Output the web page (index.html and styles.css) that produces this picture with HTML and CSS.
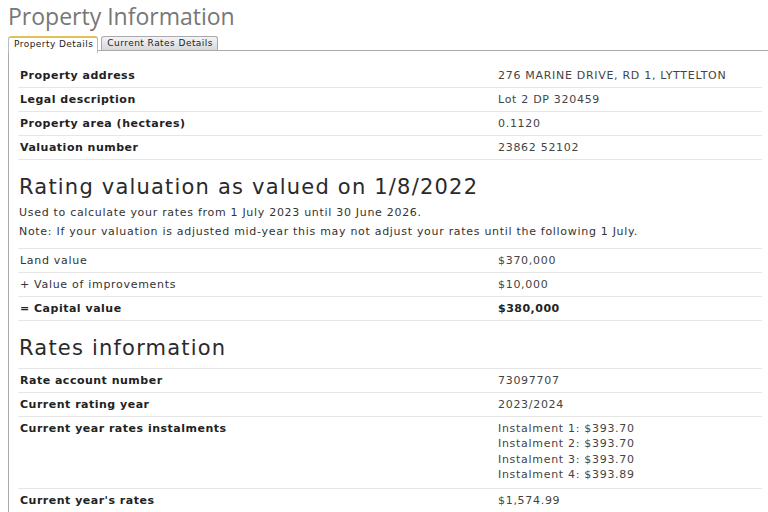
FILE: index.html
```html
<!DOCTYPE html>
<html lang="en">
<head>
  <meta charset="UTF-8">
  <meta name="viewport" content="width=device-width, initial-scale=1.0">
  <title>Property Information</title>
  <link rel="stylesheet" href="styles.css">
</head>
<body>
  <h1 class="page-title">Property Information</h1>

  <div class="tabs">
    <ul class="tab-list">
      <li class="tab active">Property Details</li>
      <li class="tab">Current Rates Details</li>
    </ul>

    <div class="tab-panel">
      <table class="info-table">
        <tr><th>Property address</th><td>276 MARINE DRIVE, RD 1, LYTTELTON</td></tr>
        <tr><th>Legal description</th><td>Lot 2 DP 320459</td></tr>
        <tr><th>Property area (hectares)</th><td>0.1120</td></tr>
        <tr><th>Valuation number</th><td>23862 52102</td></tr>
      </table>

      <h2>Rating valuation as valued on 1/8/2022</h2>
      <p class="note">Used to calculate your rates from 1 July 2023 until 30 June 2026.</p>
      <p class="note">Note: If your valuation is adjusted mid-year this may not adjust your rates until the following 1 July.</p>

      <table class="info-table lined">
        <tr><td class="label">Land value</td><td>$370,000</td></tr>
        <tr><td class="label">+ Value of improvements</td><td>$10,000</td></tr>
        <tr class="total"><th>= Capital value</th><td>$380,000</td></tr>
      </table>

      <h2>Rates information</h2>
      <table class="info-table lined">
        <tr><th>Rate account number</th><td>73097707</td></tr>
        <tr><th>Current rating year</th><td>2023/2024</td></tr>
        <tr class="multi">
          <th>Current year rates instalments</th>
          <td>
            Instalment 1: $393.70<br>
            Instalment 2: $393.70<br>
            Instalment 3: $393.70<br>
            Instalment 4: $393.89
          </td>
        </tr>
        <tr><th>Current year's rates</th><td>$1,574.99</td></tr>
      </table>
    </div>
  </div>
</body>
</html>
```

FILE: styles.css
```css
body {
  margin: 0 0 0 8px;
  font-family: "DejaVu Sans", Verdana, sans-serif;
  font-size: 11px;
  letter-spacing: 0.7px;
  color: #333;
  background: #fff;
}
.page-title {
  margin: 0;
  font-family: "Open Sans", sans-serif;
  font-weight: normal;
  font-size: 23px;
  letter-spacing: 0;
  line-height: 32px;
  color: #777;
}
.tab-list {
  display: flex;
  gap: 3px;
  list-style: none;
  margin: 4px 0 0;
  padding: 0;
  height: 14px;
}
.tab {
  font-size: 9px;
  letter-spacing: 0.45px;
  line-height: 13px;
  padding: 0 4px 0 5px;
  border: 1px solid #aaa;
  border-bottom: none;
  border-radius: 3px 3px 0 0;
  background: linear-gradient(#f4f4f6, #d6d8df);
  color: #222;
}
.tab.active {
  background: #fff;
  border-color: #e2c15a #bbb #fff #bbb;
  border-top-width: 2px;
  line-height: 12px;
  position: relative;
  z-index: 1;
  height: 15px;
}
.tab-panel {
  border-top: 1px solid #aaa;
  border-left: 1px solid #aaa;
  padding: 13px 6px 0 9px;
}
.info-table {
  width: 100%;
  border-collapse: collapse;
}
.info-table th,
.info-table td {
  text-align: left;
  padding: 0 2px;
  height: 23px;
  border-bottom: 1px solid #e6e6e6;
  vertical-align: middle;
}
.info-table th,
.info-table .label {
  width: 474px;
  color: #222;
}
.info-table th {
  font-weight: bold;
  letter-spacing: 0.5px;
}
.info-table td {
  color: #444;
}
.info-table .label {
  color: #333;
}
.info-table .total td {
  font-weight: bold;
  letter-spacing: 0.5px;
  color: #222;
}
.info-table.lined tr:first-child th,
.info-table.lined tr:first-child td {
  border-top: 1px solid #e6e6e6;
}
.info-table .multi th,
.info-table .multi td {
  vertical-align: top;
  padding-top: 4px;
  padding-bottom: 6px;
  line-height: 15.3px;
}
h2 {
  margin: 13px 0 2px 1px;
  font-weight: normal;
  font-size: 21px;
  letter-spacing: 1.2px;
  line-height: 28px;
  color: #2a2a2a;
}
h2 + .info-table {
  margin-top: 6px;
}
.note {
  margin: 0 0 0 1px;
  line-height: 19px;
}
.note + .note {
  margin-bottom: 7px;
}
```
